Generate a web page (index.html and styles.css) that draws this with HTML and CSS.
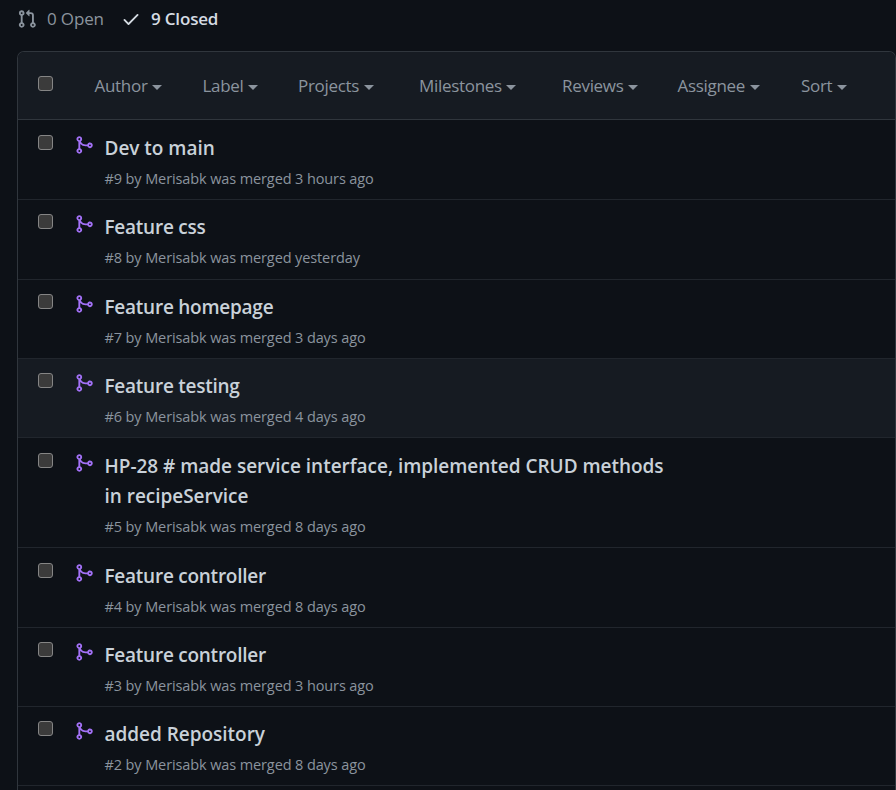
FILE: index.html
```html
<!DOCTYPE html>
<html lang="en">
<head>
<meta charset="utf-8">
<title>Pull requests</title>
<link rel="stylesheet" href="styles.css">
</head>
<body>
<svg class="defs" aria-hidden="true">
<symbol id="merge" viewBox="0 0 16 16"><path fill-rule="evenodd" d="M5 3.254V3.25v.005a.75.75 0 110-.005v.004zm.45 1.9a2.25 2.25 0 10-1.95.218v5.256a2.25 2.25 0 101.5 0V7.123A5.735 5.735 0 009.25 9h1.378a2.251 2.251 0 100-1.5H9.25a4.25 4.25 0 01-3.8-2.346zM12.75 9a.75.75 0 100-1.5.75.75 0 000 1.5zm-8.5 4.5a.75.75 0 100-1.5.75.75 0 000 1.5z"/></symbol>
</svg>
<nav class="states">
<a class="open"><svg class="pull" viewBox="0 0 16 16"><path fill-rule="evenodd" d="M7.177 3.073L9.573.677A.25.25 0 0110 .854v4.792a.25.25 0 01-.427.177L7.177 3.427a.25.25 0 010-.354zM3.75 2.5a.75.75 0 100 1.5.75.75 0 000-1.5zm-2.25.75a2.25 2.25 0 113 2.122v5.256a2.251 2.251 0 11-1.5 0V5.372A2.25 2.25 0 011.5 3.25zM11 2.5h-1V4h1a1 1 0 011 1v5.628a2.251 2.251 0 101.5 0V5A2.5 2.5 0 0011 2.5zm1 10.25a.75.75 0 111.5 0 .75.75 0 01-1.5 0zM3.75 12a.75.75 0 100 1.5.75.75 0 000-1.5z"/></svg><span class="open-text">0 Open</span></a>
<a class="closed"><svg class="check" viewBox="0 0 16 16"><path d="M13.78 4.22a.75.75 0 010 1.06l-7.25 7.25a.75.75 0 01-1.06 0L2.22 9.28a.75.75 0 011.06-1.06L6 10.94l6.72-6.72a.75.75 0 011.06 0z"/></svg><span class="closed-text">9 Closed</span></a>
</nav>
<main class="box">
<header class="filters">
<span class="checkbox"></span>
<div class="menu author"><span>Author</span><i></i></div>
<div class="menu label"><span>Label</span><i></i></div>
<div class="menu projects"><span>Projects</span><i></i></div>
<div class="menu milestones"><span>Milestones</span><i></i></div>
<div class="menu reviews"><span>Reviews</span><i></i></div>
<div class="menu assignee"><span>Assignee</span><i></i></div>
<div class="menu sort"><span>Sort</span><i></i></div>
</header>
<article class="row first"><span class="checkbox"></span><svg class="merge"><use href="#merge"/></svg><div class="info"><h2 class="wide">Dev to main</h2><p>#9 by Merisabk was merged 3 hours ago</p></div></article>
<article class="row"><span class="checkbox"></span><svg class="merge"><use href="#merge"/></svg><div class="info"><h2>Feature css</h2><p>#8 by Merisabk was merged yesterday</p></div></article>
<article class="row"><span class="checkbox"></span><svg class="merge"><use href="#merge"/></svg><div class="info"><h2>Feature homepage</h2><p>#7 by Merisabk was merged 3 days ago</p></div></article>
<article class="row active"><span class="checkbox"></span><svg class="merge"><use href="#merge"/></svg><div class="info"><h2>Feature testing</h2><p>#6 by Merisabk was merged 4 days ago</p></div></article>
<article class="row tall"><span class="checkbox"></span><svg class="merge"><use href="#merge"/></svg><div class="info"><h2 class="wide">HP-28 # made service interface, implemented CRUD methods<br>in recipeService</h2><p>#5 by Merisabk was merged 8 days ago</p></div></article>
<article class="row"><span class="checkbox"></span><svg class="merge"><use href="#merge"/></svg><div class="info"><h2>Feature controller</h2><p>#4 by Merisabk was merged 8 days ago</p></div></article>
<article class="row"><span class="checkbox"></span><svg class="merge"><use href="#merge"/></svg><div class="info"><h2>Feature controller</h2><p>#3 by Merisabk was merged 3 hours ago</p></div></article>
<article class="row last"><span class="checkbox"></span><svg class="merge"><use href="#merge"/></svg><div class="info"><h2 class="wide">added Repository</h2><p>#2 by Merisabk was merged 8 days ago</p></div></article>
</main>
</body>
</html>
```
FILE: styles.css
```css
* { box-sizing: border-box; }
body {
  display: flex;
  flex-direction: column;
  margin: 0;
  height: 790px;
  padding-left: 17px;
  background: #0d1117;
  color: #8b949e;
  font-family: "Segoe UI", "Open Sans", "Noto Sans", sans-serif;
}
.defs { display: none; }
svg { fill: currentColor; flex: none; }
.states { display: flex; flex: none; height: 51px; }
.states a { display: flex; height: 38px; align-items: center; white-space: nowrap; font-size: 17px; }
.states span { margin-top: -2px; }
.open { width: 104px; }
.pull { width: 20px; height: 20px; margin-right: 10px; }
.open-text { letter-spacing: -0.15px; }
.closed { color: #d5dce3; }
.check { width: 20px; height: 20px; margin-right: 10px; }
.closed-text { font-weight: 600; letter-spacing: -0.18px; }
.box {
  flex: 1;
  width: 879px;
  border: 1px solid #30363d;
  border-bottom: 0;
  border-radius: 7px 7px 0 0;
  overflow: hidden;
}
.filters { display: flex; height: 67px; padding-left: 20px; background: #161b22; }
.checkbox {
  flex: none;
  width: 15px;
  height: 15px;
  border: 1px solid #858585;
  border-radius: 3px;
  background: #3b3b3b;
}
.filters .checkbox { margin: 24px 41.5px 0 0; }
.menu { display: flex; align-items: center; height: 68px; font-size: 17px; letter-spacing: -0.3px; white-space: nowrap; }
.menu span { margin-top: -2px; }
.menu i { margin: 3px 0 0 4.5px; border: 5px solid transparent; border-top-color: currentColor; border-bottom: 0; }
.author { width: 108px; }
.label { width: 95.5px; }
.projects { width: 121px; }
.milestones { width: 143px; }
.reviews { width: 115.5px; }
.assignee { width: 123.5px; }
.row { display: flex; height: 79.4px; padding: 14.3px 0 0 20px; border-top: 1px solid #21262d; }
.row.first { height: 80.15px; padding-top: 15px; border-top-color: #30363d; }
.row.active { background: #161b22; }
.row.tall { height: 110px; }
.row.last { border-bottom: 1px solid #21262d; height: 80.1px; }
.merge { width: 20px; height: 20px; margin: 0 10px 0 21px; color: #a371f7; }
.info { margin: -2px 0 0 0.5px; white-space: nowrap; }
h2 { margin: 0; font-size: 19px; line-height: 30px; font-weight: 600; color: #c9d1d9; letter-spacing: -0.25px; }
h2.wide { letter-spacing: -0.03px; }
p { margin: 5px 0 0; font-size: 14.5px; line-height: 22px; letter-spacing: -0.11px; }
```
